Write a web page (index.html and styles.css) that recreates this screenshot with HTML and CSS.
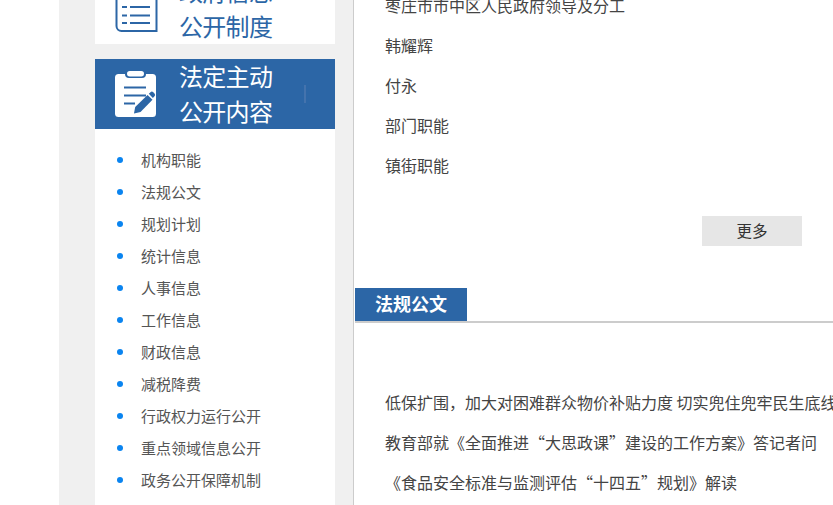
FILE: index.html
```html
<!DOCTYPE html>
<html lang="zh-CN">
<head>
<meta charset="utf-8">
<title>法定主动公开内容</title>
<link rel="stylesheet" href="styles.css">
</head>
<body>
<div class="page">
  <aside class="side">
    <a class="card">
      <svg class="icon" width="43" height="46" viewBox="0 0 43 46" fill="none" stroke="#2c66a6">
        <path d="M1.500 4V40a5 5 0 0 0 5 5H41.500V4" stroke-width="2"/>
        <path d="M7 21h5M7 29.500h5M7 37h5" stroke-width="2"/>
        <path d="M15 21h20M15 29.500h20M15 37h20" stroke-width="2"/>
      </svg>
      <span class="card-title">政府信息<br>公开制度</span>
    </a>
    <a class="card card-active">
      <svg class="icon" width="43" height="46" viewBox="0 0 43 46">
        <rect x="0" y="3" width="41" height="43" rx="3.500" fill="#fff"/>
        <rect x="10" y="-1" width="21" height="8" rx="4" fill="#2c66a6"/>
        <rect x="12" y="0" width="17" height="5.500" rx="2.750" fill="#fff"/>
        <path d="M9 16.500h22M9 24.500h22M9 32.500h11" stroke="#2c66a6" stroke-width="2" fill="none"/>
        <path d="M19 42.500l1.200-6.500L32.500 24l5 4.800L25.500 41z" fill="#2c66a6"/>
        <path d="M33.800 22.800l1.700-1.600a2 2 0 0 1 2.800 0l1.200 1.200a2 2 0 0 1 0 2.800l-1.600 1.700z" fill="#2c66a6"/>
      </svg>
      <span class="card-title">法定主动<br>公开内容</span>
      <i class="card-mark"></i>
    </a>
    <ul class="side-list">
      <li>机构职能</li>
      <li>法规公文</li>
      <li>规划计划</li>
      <li>统计信息</li>
      <li>人事信息</li>
      <li>工作信息</li>
      <li>财政信息</li>
      <li>减税降费</li>
      <li>行政权力运行公开</li>
      <li>重点领域信息公开</li>
      <li>政务公开保障机制</li>
    </ul>
  </aside>
  <main class="main">
    <ul class="news">
      <li>枣庄市市中区人民政府领导及分工</li>
      <li>韩耀辉</li>
      <li>付永</li>
      <li>部门职能</li>
      <li>镇街职能</li>
    </ul>
    <div class="more-row"><a class="more">更多</a></div>
    <div class="section-head"><h2 class="section-tab">法规公文</h2></div>
    <ul class="news news-second">
      <li>低保扩围，加大对困难群众物价补贴力度 切实兜住兜牢民生底线</li>
      <li>教育部就《全面推进“大思政课”建设的工作方案》答记者问</li>
      <li>《食品安全标准与监测评估“十四五”规划》解读</li>
    </ul>
  </main>
</div>
</body>
</html>
```

FILE: styles.css
```css
* { box-sizing: border-box; }
html, body { margin: 0; padding: 0; height: 100%; overflow: hidden; background: #fff; }
body { font-family: "Noto Sans CJK SC", "Liberation Sans", sans-serif; color: #444; }
ul { list-style: none; margin: 0; padding: 0; }
h2 { margin: 0; }

.page {
  display: flex;
  width: 833px;
  height: 505px;
  margin-top: -26px;
  padding-left: 59px;
  overflow: visible;
}

.side {
  flex: none;
  width: 295px;
  padding-left: 36px;
  padding-right: 18px;
  background: #f0f0f0;
  border-right: 1px solid #ccc;
  height: 600px;
}

.card {
  display: flex;
  align-items: center;
  position: relative;
  height: 70px;
  margin-bottom: 15px;
  padding-left: 20px;
  background: #fff;
  color: #2c66a6;
}
.card-active { background: #2c66a6; color: #fff; margin-bottom: 0; }
.icon { flex: none; margin-right: 22px; overflow: visible; }
.card-title { margin-left: -1px; padding-bottom: 2px; font-size: 24px; line-height: 35px; white-space: nowrap; letter-spacing: -0.7px; }
.card-mark {
  position: absolute;
  left: 209px;
  top: 26px;
  width: 2px;
  height: 18px;
  background: #4473ad;
}

.side-list { padding: 15px 0 20px; background: #fff; }
.side-list li {
  display: flex;
  align-items: flex-start;
  height: 32px;
  padding-left: 22px;
  font-size: 15px;
  line-height: 31px;
  color: #555;
  white-space: nowrap;
}
.side-list li::before {
  content: "";
  flex: none;
  width: 6px;
  height: 6px;
  margin-top: 13px;
  margin-right: 18px;
  border-radius: 50%;
  background: #0a84f0;
}

.main { flex: 1; min-width: 0; padding-top: 12px; padding-left: 1px; }
.news { padding-left: 30px; }
.news li { height: 40px; line-height: 38px; font-size: 16px; color: #444; white-space: nowrap; }
.news-second { margin-top: 60px; }

.more-row { display: flex; justify-content: flex-end; margin-top: 30px; padding-right: 31px; }
.more {
  display: block;
  width: 100px;
  height: 30px;
  line-height: 29px;
  text-align: center;
  font-size: 15.5px;
  color: #333;
  background: #e6e6e6;
}

.section-head { margin-top: 42px; border-bottom: 2px solid #ccc; }
.section-tab {
  width: 112px;
  height: 33px;
  line-height: 31px;
  text-align: center;
  font-size: 18px;
  font-weight: 700;
  color: #fff;
  background: #2c66a6;
}
```
